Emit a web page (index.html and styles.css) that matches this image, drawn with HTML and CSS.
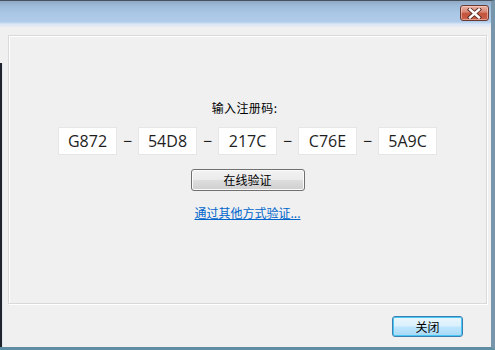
FILE: index.html
```html
<!DOCTYPE html>
<html>
<head>
<meta charset="utf-8">
<link rel="stylesheet" href="styles.css">
</head>
<body>
<div class="win">
  <div class="titlebar">
    <div class="close-btn">
      <svg width="17" height="11" viewBox="0 0 17 11">
        <path d="M4 1.5 L13 9.5 M13 1.5 L4 9.5" stroke="#5a2a22" stroke-width="4.2" stroke-linecap="square" fill="none"/>
        <path d="M4 1.5 L13 9.5 M13 1.5 L4 9.5" stroke="#ffffff" stroke-width="2.4" stroke-linecap="square" fill="none"/>
      </svg>
    </div>
  </div>
  <div class="client">
    <div class="left-edge"></div>
    <div class="main">
      <div class="panel">
        <div class="label">输入注册码:</div>
        <div class="code-row">
          <div class="code">G872</div>
          <div class="dash">−</div>
          <div class="code">54D8</div>
          <div class="dash">−</div>
          <div class="code">217C</div>
          <div class="dash">−</div>
          <div class="code">C76E</div>
          <div class="dash">−</div>
          <div class="code">5A9C</div>
        </div>
        <div class="btn verify">在线验证</div>
        <a class="link" href="#">通过其他方式验证...</a>
      </div>
      <div class="footer">
        <div class="btn close-dlg">关闭</div>
      </div>
    </div>
  </div>
</div>
</body>
</html>
```
FILE: styles.css
```css
html, body {
  margin: 0;
  padding: 0;
}
body {
  width: 495px;
  height: 350px;
  overflow: hidden;
  background: #f0f0f0;
  font-family: "Noto Sans CJK SC", "Liberation Sans", sans-serif;
  font-size: 12px;
  color: #000;
}
.win {
  width: 495px;
  height: 350px;
  box-sizing: border-box;
  display: flex;
  flex-direction: column;
  border-top: 1px solid #47525e;
  border-right: 4px solid #7896ab;
  border-bottom: 3px solid #5f8ea3;
  background: #f0f0f0;
}
.titlebar {
  height: 24px;
  flex: none;
  background: linear-gradient(#90a9c4 0px, #9fbbda 5px, #aac7e6 12px, #b1ccea 21px, #c9dcf2 22px, #e2eaf7 24px);
  display: flex;
  justify-content: flex-end;
  align-items: flex-start;
  padding: 4px 2px 0 0;
  box-sizing: border-box;
}
.close-btn {
  width: 29px;
  height: 16px;
  box-sizing: border-box;
  border: 1px solid #6a3a32;
  border-radius: 3px;
  background: linear-gradient(#eab2a4 0%, #d98a78 40%, #c4533c 55%, #c8604a 100%);
  box-shadow: inset 0 0 0 1px rgba(255,220,210,0.5);
  display: flex;
  align-items: center;
  justify-content: center;
}
.client {
  flex: 1;
  display: flex;
  border-top: 2px solid #e4e9f3;
}
.left-edge {
  width: 2px;
  flex: none;
  margin-top: 36px;
  background: #1f252b;
  border-right: 1px solid #dde6ee;
}
.main {
  flex: 1;
  display: flex;
  flex-direction: column;
  padding: 8px 4px 0 5px;
}
.panel {
  height: 269px;
  box-sizing: border-box;
  border: 1px solid #d9d9d9;
  box-shadow: inset 1px 1px 0 #ffffff, 1px 1px 0 #ffffff;
  display: flex;
  flex-direction: column;
  align-items: center;
  padding-top: 64px;
}
.label {
  font-size: 12px;
  line-height: 16px;
  height: 16px;
  color: #000;
  letter-spacing: 0.4px;
  padding-right: 6px;
}
.code-row {
  margin-top: 11px;
  display: flex;
  align-items: center;
}
.code {
  width: 59px;
  height: 28px;
  box-sizing: border-box;
  background: #fff;
  border: 1px solid #e6e6e6;
  font-family: "Open Sans", "Liberation Sans", sans-serif;
  font-size: 16px;
  line-height: 26px;
  text-align: center;
  color: #1e1e1e;
}
.dash {
  width: 21px;
  text-align: center;
  font-family: "Open Sans", "Liberation Sans", sans-serif;
  font-size: 16px;
  line-height: 26px;
  color: #1e1e1e;
}
.btn {
  box-sizing: border-box;
  border-radius: 3px;
  text-align: center;
  font-size: 12px;
}
.verify {
  margin-top: 14px;
  width: 114px;
  height: 22px;
  line-height: 20px;
  border: 1px solid #707070;
  background: linear-gradient(#f2f2f2 0%, #ebebeb 48%, #dddddd 52%, #cfcfcf 100%);
  box-shadow: inset 0 0 0 1px #fbfbfb;
}
.link {
  margin-top: 14px;
  font-size: 12px;
  line-height: 16px;
  color: #0066cc;
  text-decoration: underline;
}
.footer {
  flex: 1;
  display: flex;
  justify-content: flex-end;
  align-items: flex-start;
  padding: 12px 24px 0 0;
}
.close-dlg {
  width: 71px;
  height: 21px;
  line-height: 19px;
  border: 1px solid #3c7fb1;
  background: linear-gradient(#eaf6fd 0%, #d9f0fc 48%, #bee6fd 52%, #a7d9f5 100%);
  box-shadow: inset 0 0 0 1px #48c7f5;
}
```
